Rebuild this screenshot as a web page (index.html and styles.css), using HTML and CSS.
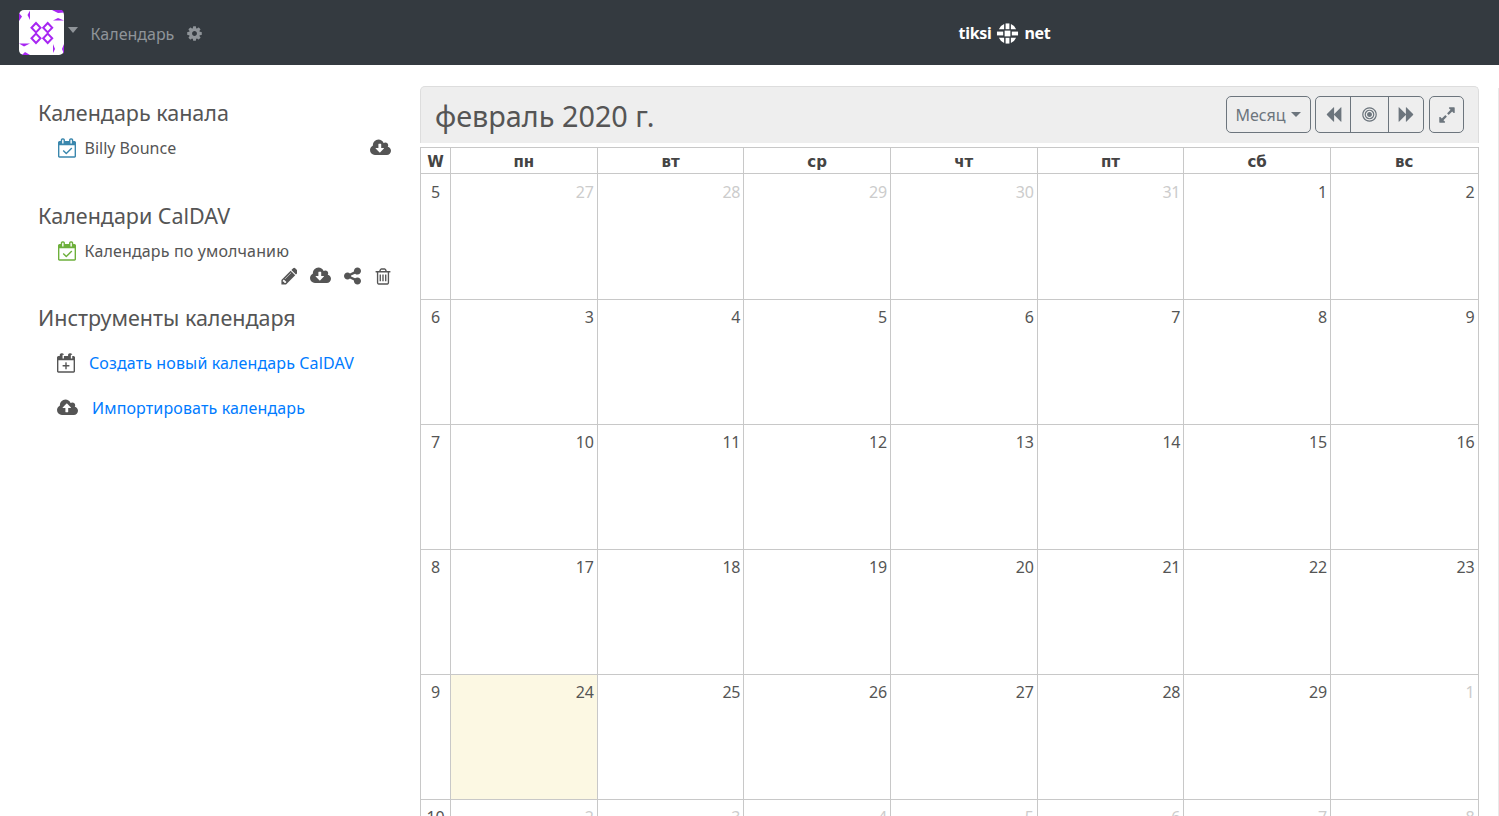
FILE: index.html
```html
<!DOCTYPE html>
<html lang="ru">
<head>
<meta charset="utf-8">
<title>Календарь</title>
<link rel="stylesheet" href="styles.css">
</head>
<body>
<svg class="defs" width="0" height="0" aria-hidden="true">
  <symbol id="i-cog" viewBox="0 0 1792 1792"><path d="M1152 896q0-106-75-181t-181-75-181 75-75 181 75 181 181 75 181-75 75-181zm512-109v222q0 12-8 23t-20 13l-185 28q-19 54-39 91 35 50 107 138 10 12 10 25t-9 23q-27 37-99 108t-94 71q-12 0-26-9l-138-108q-44 23-91 38-16 136-29 186-7 28-36 28h-222q-14 0-24.5-8.5t-11.5-21.5l-28-184q-49-16-90-37l-141 107q-10 9-25 9-14 0-25-11-126-114-165-168-7-10-7-23 0-12 8-23 15-21 51-66.5t54-70.5q-27-50-41-99l-183-27q-13-2-21-12.5t-8-23.5v-222q0-12 8-23t19-13l186-28q14-46 39-92-40-57-107-138-10-12-10-24 0-10 9-23 26-36 98.5-107.5t94.5-71.5q13 0 26 10l138 107q44-23 91-38 16-136 29-186 7-28 36-28h222q14 0 24.5 8.5t11.5 21.5l28 184q49 16 90 37l142-107q9-9 24-9 13 0 25 10 129 119 165 170 7 8 7 22 0 12-8 23-15 21-51 66.5t-54 70.5q26 50 41 98l183 28q13 2 21 12.5t8 23.5z"/></symbol>
  <symbol id="i-down" viewBox="0 0 1920 1792"><path d="M1280 928q0-14-9-23t-23-9h-224v-352q0-13-9.5-22.5t-22.5-9.5h-192q-13 0-22.5 9.5t-9.5 22.5v352h-224q-13 0-22.5 9.5t-9.5 22.5q0 14 9 23l352 352q9 9 23 9t23-9l351-351q10-12 10-24zm640 224q0 159-112.5 271.5t-271.5 112.5h-1088q-185 0-316.5-131.5t-131.5-316.5q0-130 70-240t188-165q-2-30-2-43 0-212 150-362t362-150q156 0 285.5 87t188.5 231q71-62 166-62 106 0 181 75t75 181q0 76-41 138 130 31 213.5 135.5t83.5 238.5z"/></symbol>
  <symbol id="i-up" viewBox="0 0 1920 1792"><path d="M1280 864q0-14-9-23l-352-352q-9-9-23-9t-23 9l-351 351q-10 12-10 24 0 14 9 23t23 9h224v352q0 13 9.5 22.5t22.5 9.5h192q13 0 22.5-9.5t9.5-22.5v-352h224q13 0 22.5-9.5t9.5-22.5zm640 288q0 159-112.5 271.5t-271.5 112.5h-1088q-185 0-316.5-131.5t-131.5-316.5q0-130 70-240t188-165q-2-30-2-43 0-212 150-362t362-150q156 0 285.5 87t188.5 231q71-62 166-62 106 0 181 75t75 181q0 76-41 138 130 31 213.5 135.5t83.5 238.5z"/></symbol>
  <symbol id="i-check" viewBox="0 0 1664 1792"><path d="M1303 964l-512 512q-10 9-23 9t-23-9l-288-288q-9-10-9-23t9-22l46-46q9-9 22-9t23 9l220 220 444-444q10-9 23-9t22 9l46 46q9 9 9 22t-9 23zm-1175 700h1408v-1024h-1408v1024zm384-1216v-288q0-14-9-23t-23-9h-64q-14 0-23 9t-9 23v288q0 14 9 23t23 9h64q14 0 23-9t9-23zm768 0v-288q0-14-9-23t-23-9h-64q-14 0-23 9t-9 23v288q0 14 9 23t23 9h64q14 0 23-9t9-23zm384-64v1280q0 52-38 90t-90 38h-1408q-52 0-90-38t-38-90v-1280q0-52 38-90t90-38h128v-96q0-66 47-113t113-47h64q66 0 113 47t47 113v96h384v-96q0-66 47-113t113-47h64q66 0 113 47t47 113v96h128q52 0 90 38t38 90z"/></symbol>
  <symbol id="i-plus" viewBox="0 0 1664 1792"><path d="M1536 256q52 0 90 38t38 90v1280q0 52-38 90t-90 38h-1408q-52 0-90-38t-38-90v-1280q0-52 38-90t90-38h128v-96q0-66 47-113t113-47h64q66 0 113 47t47 113v96h384v-96q0-66 47-113t113-47h64q66 0 113 47t47 113v96h128zm-256-96v288q0 14 9 23t23 9h64q14 0 23-9t9-23v-288q0-14-9-23t-23-9h-64q-14 0-23 9t-9 23zm-768 0v288q0 14 9 23t23 9h64q14 0 23-9t9-23v-288q0-14-9-23t-23-9h-64q-14 0-23 9t-9 23zm1024 1504v-1024h-1408v1024h1408zm-640-576h224q14 0 23 9t9 23v64q0 14-9 23t-23 9h-224v224q0 14-9 23t-23 9h-64q-14 0-23-9t-9-23v-224h-224q-14 0-23-9t-9-23v-64q0-14 9-23t23-9h224v-224q0-14 9-23t23-9h64q14 0 23 9t9 23v224z"/></symbol>
  <symbol id="i-pencil" viewBox="0 0 1536 1792"><path d="M491 1536l91-91-235-235-91 91v107h128v128h107zm523-928q0-22-22-22-10 0-17 7l-542 542q-7 7-7 17 0 22 22 22 10 0 17-7l542-542q7-7 7-17zm-54-192l416 416-832 832h-416v-416zm683 96q0 53-37 90l-166 166-416-416 166-165q36-38 90-38 53 0 91 38l235 234q37 39 37 91z"/></symbol>
  <symbol id="i-share" viewBox="0 0 1536 1792"><path d="M1216 1024q133 0 226.5 93.5t93.5 226.5-93.5 226.5-226.5 93.5-226.5-93.5-93.5-226.5q0-12 2-34l-360-180q-92 86-218 86-133 0-226.5-93.5t-93.5-226.5 93.5-226.5 226.5-93.5q126 0 218 86l360-180q-2-22-2-34 0-133 93.5-226.5t226.5-93.5 226.5 93.5 93.5 226.5-93.5 226.5-226.5 93.5q-126 0-218-86l-360 180q2 22 2 34t-2 34l360 180q92-86 218-86z"/></symbol>
  <symbol id="i-trash" viewBox="0 0 1408 1792"><path d="M512 736v576q0 14-9 23t-23 9h-64q-14 0-23-9t-9-23v-576q0-14 9-23t23-9h64q14 0 23 9t9 23zm256 0v576q0 14-9 23t-23 9h-64q-14 0-23-9t-9-23v-576q0-14 9-23t23-9h64q14 0 23 9t9 23zm256 0v576q0 14-9 23t-23 9h-64q-14 0-23-9t-9-23v-576q0-14 9-23t23-9h64q14 0 23 9t9 23zm128 724v-948h-896v948q0 22 7 40.5t14.5 27 10.5 8.5h832q3 0 10.5-8.5t14.5-27 7-40.5zm-672-1076h448l-48-117q-7-9-17-11h-317q-10 2-17 11zm928 32v64q0 14-9 23t-23 9h-96v948q0 83-47 143.5t-113 60.5h-832q-66 0-113-58.5t-47-141.5v-952h-96q-14 0-23-9t-9-23v-64q0-14 9-23t23-9h309l70-167q15-37 54-63t79-26h320q40 0 79 26t54 63l70 167h309q14 0 23 9t9 23z"/></symbol>
  <symbol id="i-back" viewBox="0 0 1792 1792"><path d="M1683 141q19-19 32-13t13 32v1472q0 26-13 32t-32-13l-710-710q-9-9-13-19v710q0 26-13 32t-32-13l-710-710q-19-19-19-45t19-45l710-710q19-19 32-13t13 32v710q4-10 13-19z"/></symbol>
  <symbol id="i-fwd" viewBox="0 0 1792 1792"><path d="M109 1651q-19 19-32 13t-13-32v-1472q0-26 13-32t32 13l710 710q9 9 13 19v-710q0-26 13-32t32 13l710 710q19 19 19 45t-19 45l-710 710q-19 19-32 13t-13-32v-710q-4 10-13 19z"/></symbol>
  <symbol id="i-bull" viewBox="0 0 1792 1792"><path d="M1152 896q0 106-75 181t-181 75-181-75-75-181 75-181 181-75 181 75 75 181zm128 0q0-159-112.5-271.5t-271.5-112.5-271.5 112.5-112.5 271.5 112.5 271.5 271.5 112.5 271.5-112.5 112.5-271.5zm128 0q0 212-150 362t-362 150-362-150-150-362 150-362 362-150 362 150 150 362zm128 0q0-130-51-248.5t-136.5-204-204-136.5-248.5-51-248.5 51-204 136.5-136.5 204-51 248.5 51 248.5 136.5 204 204 136.5 248.5 51 248.5-51 204-136.5 136.5-204 51-248.5zm128 0q0 209-103 385.5t-279.5 279.5-385.5 103-385.5-103-279.5-279.5-103-385.5 103-385.5 279.5-279.5 385.5-103 385.5 103 279.5 279.5 103 385.5z"/></symbol>
  <symbol id="i-exp" viewBox="0 0 1792 1792"><path d="M883 1056q0 13-10 23l-332 332 144 144q19 19 19 45t-19 45-45 19h-448q-26 0-45-19t-19-45v-448q0-26 19-45t45-19 45 19l144 144 332-332q10-10 23-10t23 10l114 114q10 10 10 23zm781-864v448q0 26-19 45t-45 19-45-19l-144-144-332 332q-10 10-23 10t-23-10l-114-114q-10-10-10-23t10-23l332-332-144-144q-19-19-19-45t19-45 45-19h448q26 0 45 19t19 45z"/></symbol>
</svg>

<header class="navbar">
  <div class="nav-left">
    <svg class="logo" viewBox="0 0 45 45" aria-label="logo">
      <rect width="45" height="45" rx="5" fill="#fff"/>
      <g fill="#a726f2">
        <path d="M0 3 L3 6.500 L0 11Z"/><path d="M11 0.500 L8.500 5 L11 10Z"/>
        <path d="M33 0 H43 L45 2.500 L39 3Z"/><path d="M34 10.500 L39 8 L45 10.500Z"/>
        <path d="M0 33.500 H11 L5 36.500Z"/><path d="M3 45 L6 42 L11 45Z"/>
        <path d="M34 34 L36 39 L34 43Z"/><path d="M45 34 L43 39 L45 44Z"/>
      </g>
      <g fill="none" stroke="#a726f2" stroke-width="2">
        <path d="M17 13 L21.500 17.700 L17 22.400 L12.500 17.700Z"/><path d="M28.700 13 L33.200 17.700 L28.700 22.400 L24.200 17.700Z"/>
        <path d="M17 23.600 L21.500 28.300 L17 33 L12.500 28.300Z"/><path d="M28.700 23.600 L33.200 28.300 L28.700 33 L24.200 28.300Z"/>
      </g>
    </svg>
    <span class="caret nav-caret"></span>
    <span class="nav-title">Календарь</span>
    <svg class="nav-cog"><use href="#i-cog"/></svg>
  </div>
  <div class="brand">
    <span>tiksi</span>
    <svg class="brand-mark" viewBox="0 0 24 24" aria-label="tiksi">
      <g fill="#fff">
        <rect x="9" y="9" width="6" height="6"/>
        <rect x="10" y="1.500" width="4" height="6"/><rect x="10" y="16.500" width="4" height="6"/>
        <rect x="1" y="10" width="6.500" height="4"/><rect x="16.500" y="10" width="6.500" height="4"/>
        <path d="M8.500 2.200 V7.500 H3 Q4.500 3.800 8.500 2.200Z"/>
        <path d="M15.500 2.200 V7.500 H21 Q19.500 3.800 15.500 2.200Z"/>
        <path d="M8.500 21.800 V16.500 H3 Q4.500 20.200 8.500 21.800Z"/>
        <path d="M15.500 21.800 V16.500 H21 Q19.500 20.200 15.500 21.800Z"/>
      </g>
    </svg>
    <span>net</span>
  </div>
</header>

<div class="layout">
  <aside class="sidebar">
    <h3 class="side-title">Календарь канала</h3>
    <div class="cal-row">
      <svg class="ic ic-cal blue"><use href="#i-check"/></svg>
      <span class="cal-name latin">Billy Bounce</span>
      <svg class="ic ic-cloud row-end"><use href="#i-down"/></svg>
    </div>
    <h3 class="side-title second">Календари CalDAV</h3>
    <div class="cal-row">
      <svg class="ic ic-cal green"><use href="#i-check"/></svg>
      <span class="cal-name">Календарь по умолчанию</span>
    </div>
    <div class="actions">
      <svg class="ic ic-pencil"><use href="#i-pencil"/></svg>
      <svg class="ic ic-cloud"><use href="#i-down"/></svg>
      <svg class="ic ic-share"><use href="#i-share"/></svg>
      <svg class="ic ic-trash"><use href="#i-trash"/></svg>
    </div>
    <h3 class="side-title third">Инструменты календаря</h3>
    <div class="tool-row">
      <svg class="ic ic-cal"><use href="#i-plus"/></svg>
      <a class="tool-link" href="#">Создать новый календарь CalDAV</a>
    </div>
    <div class="tool-row import">
      <svg class="ic ic-cloud"><use href="#i-up"/></svg>
      <a class="tool-link" href="#">Импортировать календарь</a>
    </div>
  </aside>

  <main class="calendar">
    <div class="cal-head">
      <h2 class="cal-title">февраль 2020 г.</h2>
      <div class="toolbar">
        <button class="btn btn-month">Месяц<span class="caret"></span></button>
        <div class="btn-group">
          <button class="btn btn-icon"><svg class="tb-ic"><use href="#i-back"/></svg></button>
          <button class="btn btn-icon"><svg class="tb-ic tb-bull"><use href="#i-bull"/></svg></button>
          <button class="btn btn-icon"><svg class="tb-ic"><use href="#i-fwd"/></svg></button>
        </div>
        <button class="btn btn-exp"><svg class="tb-ic tb-exp"><use href="#i-exp"/></svg></button>
      </div>
    </div>
    <table class="grid">
      <colgroup><col class="col-w"><col class="col-d"><col class="col-d"><col class="col-d"><col class="col-d"><col class="col-d"><col class="col-d"><col></colgroup>
      <thead>
        <tr><th>W</th><th>пн</th><th>вт</th><th>ср</th><th>чт</th><th>пт</th><th>сб</th><th>вс</th></tr>
      </thead>
      <tbody>
        <tr><td class="wk">5</td><td class="off">27</td><td class="off">28</td><td class="off">29</td><td class="off">30</td><td class="off">31</td><td>1</td><td>2</td></tr>
        <tr><td class="wk">6</td><td>3</td><td>4</td><td>5</td><td>6</td><td>7</td><td>8</td><td>9</td></tr>
        <tr><td class="wk">7</td><td>10</td><td>11</td><td>12</td><td>13</td><td>14</td><td>15</td><td>16</td></tr>
        <tr><td class="wk">8</td><td>17</td><td>18</td><td>19</td><td>20</td><td>21</td><td>22</td><td>23</td></tr>
        <tr><td class="wk">9</td><td class="today">24</td><td>25</td><td>26</td><td>27</td><td>28</td><td>29</td><td class="off">1</td></tr>
        <tr><td class="wk">10</td><td class="off">2</td><td class="off">3</td><td class="off">4</td><td class="off">5</td><td class="off">6</td><td class="off">7</td><td class="off">8</td></tr>
      </tbody>
    </table>
  </main>
  <div class="edge"></div>
</div>
</body>
</html>
```

FILE: styles.css
```css
* { box-sizing: border-box; }
html, body { height: 816px; overflow: hidden; }
body {
  margin: 0;
  background: #fff;
  color: #555;
  font-family: "Noto Sans", "Open Sans", sans-serif;
  font-size: 16px;
}
.defs { display: block; height: 0; }

.navbar {
  height: 65px;
  background: #343a40;
  display: flex;
  align-items: center;
  position: relative;
  padding-left: 19px;
}
.nav-left { display: flex; align-items: center; }
.logo { width: 45px; height: 45px; display: block; }
.caret {
  display: inline-block;
  width: 0;
  height: 0;
  border-top: 5px solid currentColor;
  border-left: 5px solid transparent;
  border-right: 5px solid transparent;
}
.nav-caret {
  color: #8f9499;
  margin: -5px 0 0 4px;
  border-top-width: 6px;
  border-left-width: 5.5px;
  border-right-width: 5.5px;
}
.nav-title { color: #8f9499; margin: 2px 0 0 12.500px; font-size: 16px; }
.nav-cog { width: 17px; height: 17px; fill: #8f9499; margin: 2px 0 0 12px; }
.brand {
  position: absolute;
  left: 958.500px;
  top: 21px;
  display: flex;
  align-items: center;
  gap: 5px;
  color: #fff;
  font-weight: 700;
  font-size: 16px;
  line-height: 24px;
  letter-spacing: -.3px;
}
.brand-mark { width: 23px; height: 23px; display: block; }

.layout { display: flex; padding-top: 21px; }
.sidebar { width: 420px; flex: none; padding: 14px 29px 0 38px; }
.side-title {
  margin: 0;
  font-size: 21.5px;
  line-height: 26px;
  font-weight: 400;
  color: #555;
}
.side-title.second { margin-top: 43px; }
.side-title.third { margin-top: 19px; }
.cal-row { display: flex; align-items: center; padding-left: 19.500px; margin-top: 10px; height: 24px; }
.cal-name { font-size: 16px; margin-left: 9px; letter-spacing: .14px; color: #555; }
.cal-name.latin { letter-spacing: 0; }
.row-end { margin-left: auto; }
.ic { display: block; fill: #555; }
.ic-cal { width: 18px; height: 20px; }
.blue { fill: #3a87ad; }
.green { fill: #6eb03c; }
.ic-cloud { width: 21px; height: 20px; }
.ic-pencil { width: 17px; height: 20px; }
.ic-share { width: 17px; height: 20px; }
.ic-trash { width: 16px; height: 19px; margin-left: 1px; }
.actions { display: flex; justify-content: flex-end; align-items: center; gap: 13px; height: 20px; margin-top: 3px; }
.tool-row { display: flex; align-items: center; padding-left: 19px; margin-top: 19px; height: 26px; }
.tool-link { color: #007bff; text-decoration: none; font-size: 16px; margin-left: 14px; letter-spacing: .13px; }

.calendar { width: 1059px; flex: none; }
.cal-head {
  height: 57px;
  background: #eee;
  border: 1px solid #ddd;
  border-bottom: 0;
  border-radius: 5px 5px 0 0;
  display: flex;
  align-items: center;
  justify-content: space-between;
  padding: 0 14px;
}
.cal-title { margin: 2px 0 0; font-size: 28.8px; font-weight: 400; color: #555; line-height: 40px; }
.toolbar { display: flex; gap: 4px; margin-top: -1px; }
.btn {
  height: 37px;
  background: transparent;
  border: 1px solid #6c757d;
  border-radius: 5px;
  color: #6c757d;
  padding: 0;
  font: inherit;
  display: flex;
  align-items: center;
  justify-content: center;
}
.btn-month { width: 85px; gap: 5px; padding-right: 1px; }
.btn-group { display: flex; }
.btn-icon { width: 37px; border-radius: 0; margin-left: -1px; }
.btn-icon:first-child { width: 36px; margin-left: 0; border-radius: 5px 0 0 5px; }
.btn-icon:nth-child(2) { width: 39px; }
.btn-icon:last-child { width: 36px; border-radius: 0 5px 5px 0; }
.btn-exp { width: 35px; margin-left: 1px; }
.tb-ic { width: 17px; height: 17px; fill: #6c757d; }
.tb-bull { width: 17px; height: 17px; }
.tb-exp { width: 18px; height: 18px; }

.grid {
  width: 1058.5px;
  margin-top: 4px;
  table-layout: fixed;
  border-collapse: collapse;
  font-size: 16px;
}
.col-w { width: 30px; }
.col-d { width: 146.67px; }
.grid th, .grid td { border: 1px solid #c8c8c8; }
.grid th {
  height: 26px;
  padding: 3px 0 0;
  font-family: "DejaVu Sans", sans-serif;
  font-size: 15px;
  line-height: 20px;
  font-weight: 700;
  color: #444;
  text-align: center;
}
.grid td {
  height: 125px;
  padding: 5px 3px 0;
  text-align: right;
  vertical-align: top;
  color: #555;
  line-height: 24px;
  letter-spacing: -.2px;
}
.grid tbody tr:first-child td { height: 126px; padding-top: 6px; }
.grid td.wk { text-align: center; }
.grid td.off { color: #ccc; }
.grid td.today { background: #fcf8e3; }

.edge {
  width: 1px;
  flex: none;
  margin: 2px 0 0 19px;
  height: 730px;
  background: #e9e9e9;
}
```
